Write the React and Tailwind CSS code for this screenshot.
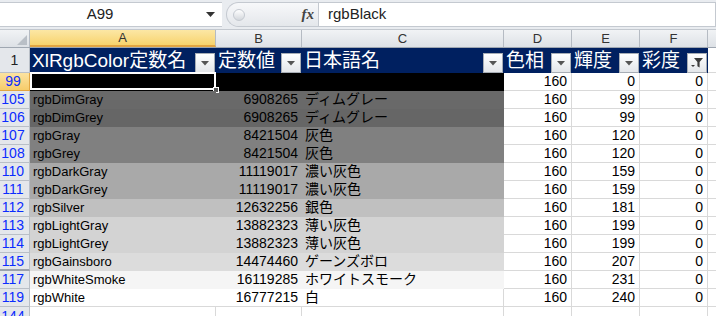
import React from 'react';

const FONT = { fontFamily: '"Liberation Sans", "Noto Sans CJK JP", sans-serif' };

const COLS = ['A', 'B', 'C', 'D', 'E', 'F'];
const W = ['w-[186px]', 'w-[86px]', 'w-[202px]', 'w-[68px]', 'w-[68px]', 'w-[68px]'];

const rows = [
  { n: 99, name: 'rgbBlack', val: '0', jp: '黒', h: 160, l: 0, s: 0, fill: 'bg-black border-black' },
  { n: 105, name: 'rgbDimGray', val: '6908265', jp: 'ディムグレー', h: 160, l: 99, s: 0, fill: 'bg-[#696969] border-[#696969]' },
  { n: 106, name: 'rgbDimGrey', val: '6908265', jp: 'ディムグレー', h: 160, l: 99, s: 0, fill: 'bg-[#666666] border-[#666666]' },
  { n: 107, name: 'rgbGray', val: '8421504', jp: '灰色', h: 160, l: 120, s: 0, fill: 'bg-[#808080] border-[#808080]' },
  { n: 108, name: 'rgbGrey', val: '8421504', jp: '灰色', h: 160, l: 120, s: 0, fill: 'bg-[#808080] border-[#808080]' },
  { n: 110, name: 'rgbDarkGray', val: '11119017', jp: '濃い灰色', h: 160, l: 159, s: 0, fill: 'bg-[#a9a9a9] border-[#a9a9a9]' },
  { n: 111, name: 'rgbDarkGrey', val: '11119017', jp: '濃い灰色', h: 160, l: 159, s: 0, fill: 'bg-[#a9a9a9] border-[#a9a9a9]' },
  { n: 112, name: 'rgbSilver', val: '12632256', jp: '銀色', h: 160, l: 181, s: 0, fill: 'bg-[#c0c0c0] border-[#c0c0c0]' },
  { n: 113, name: 'rgbLightGray', val: '13882323', jp: '薄い灰色', h: 160, l: 199, s: 0, fill: 'bg-[#d3d3d3] border-[#d3d3d3]' },
  { n: 114, name: 'rgbLightGrey', val: '13882323', jp: '薄い灰色', h: 160, l: 199, s: 0, fill: 'bg-[#d3d3d3] border-[#d3d3d3]' },
  { n: 115, name: 'rgbGainsboro', val: '14474460', jp: 'ゲーンズボロ', h: 160, l: 207, s: 0, fill: 'bg-[#dcdcdc] border-[#dcdcdc]' },
  { n: 117, name: 'rgbWhiteSmoke', val: '16119285', jp: 'ホワイトスモーク', h: 160, l: 231, s: 0, fill: 'bg-[#f5f5f5] border-[#f5f5f5]' },
  { n: 119, name: 'rgbWhite', val: '16777215', jp: '白', h: 160, l: 240, s: 0, fill: 'bg-white border-[#d9d9d9]' },
];

function FilterButton({ funnel }) {
  return (
    <div className="w-[20px] h-[20px] mr-[1px] shrink-0 bg-gradient-to-b from-white to-[#e3e6ea] border border-[#a7adb5] flex items-center justify-center">
      {funnel ? (
        <svg width="14" height="12" viewBox="0 0 14 12">
          <path d="M4 1h9L9.6 5v5.5L7.4 9.2V5z" fill="#3c3c3c" />
          <path d="M1 8h4L3 10z" fill="#3c3c3c" />
        </svg>
      ) : (
        <svg width="8" height="5" viewBox="0 0 8 5">
          <path d="M0 0h8L4 4.5z" fill="#555" />
        </svg>
      )}
    </div>
  );
}

function HeaderCell({ label, w, funnel }) {
  return (
    <div className={`${w} h-full shrink-0 flex items-end justify-between bg-[#002060] pl-[2px]`}>
      <span className="text-white text-[19px] leading-[24px] whitespace-nowrap self-center">{label}</span>
      <FilterButton funnel={funnel} />
    </div>
  );
}

export default function App() {
  return (
    <div className="w-[716px] h-[316px] overflow-hidden bg-white select-none" style={FONT}>
      {/* formula bar */}
      <div className="h-[30px] bg-[#e9ecf0] border-b border-[#c3c8cf] flex items-start pt-[2px]">
        <div className="w-[222px] h-[25px] bg-white border-y border-[#c4c9d0] flex items-center relative">
          <span className="w-[200px] text-center text-[15px] text-[#222]">A99</span>
          <svg className="ml-[6px]" width="9" height="5" viewBox="0 0 9 5">
            <path d="M0 0h9L4.5 5z" fill="#333" />
          </svg>
        </div>
        <div className="w-[4px]" />
        <div className="w-[92px] h-[25px] rounded-l-full bg-gradient-to-b from-[#f7f8fa] to-[#e4e7eb] border border-[#c4c9d0] border-r-0 flex items-center pl-[6px] pr-[4px]">
          <div className="w-[12px] h-[12px] rounded-full bg-gradient-to-b from-white to-[#d3d7dc] border border-[#c4c9d0]" />
          <span className="ml-auto text-[15px] italic font-bold text-[#444]" style={{ fontFamily: '"Liberation Serif", serif' }}>fx</span>
        </div>
        <div className="flex-1 h-[25px] bg-white border border-[#c4c9d0] flex items-center pl-[9px]">
          <span className="text-[15px] text-[#222]">rgbBlack</span>
        </div>
      </div>

      {/* column headers */}
      <div className="flex h-[18px] bg-gradient-to-b from-[#f1f3f5] to-[#dde1e6] border-b border-[#9fa7b1]">
        <div className="w-[30px] shrink-0 border-r border-[#b5bbc3] relative">
          <svg className="absolute right-[2px] bottom-[2px]" width="10" height="10" viewBox="0 0 10 10">
            <path d="M10 0v10H0z" fill="#b9bfc6" />
          </svg>
        </div>
        {COLS.map((c, i) => (
          <div
            key={c}
            className={`${W[i]} shrink-0 flex items-center justify-center text-[13px] text-[#333] border-r border-[#b5bbc3] ${
              i === 0 ? 'bg-gradient-to-b from-[#fce7a4] to-[#f7d36c] border-b-2 border-b-[#e2a541]' : ''
            }`}
          >
            {c}
          </div>
        ))}
        <div className="flex-1" />
      </div>

      {/* row 1: table header */}
      <div className="flex h-[25px]">
        <div className="w-[30px] shrink-0 bg-[#e4e7eb] border-r border-b border-[#b9bfc7] flex items-end justify-center pb-[1px] text-[14px] text-[#222]">
          1
        </div>
        <HeaderCell label="XlRgbColor定数名" w={W[0]} />
        <HeaderCell label="定数値" w={W[1]} />
        <HeaderCell label="日本語名" w={W[2]} />
        <HeaderCell label="色相" w={W[3]} />
        <HeaderCell label="輝度" w={W[4]} />
        <HeaderCell label="彩度" w={W[5]} funnel />
        <div className="flex-1 border-b border-[#d9d9d9]" />
      </div>

      {/* data rows */}
      {rows.map((r, idx) => {
        const sel = idx === 0;
        return (
          <div key={r.n} className="flex h-[18px]">
            <div
              className={`w-[30px] shrink-0 border-r flex items-center justify-center pr-[3px] text-[14px] text-[#0a2cff] ${
                sel
                  ? 'bg-gradient-to-b from-[#fce3a0] to-[#f6cc6a] border-[#e2a541] border-b'
                  : r.n === 115
                  ? 'bg-[#e4e7eb] border-[#b9bfc7] border-b-2 border-b-[#9aa1ab]'
                  : 'bg-[#e4e7eb] border-[#b9bfc7] border-b'
              }`}
            >
              {r.n}
            </div>
            <div className={`${W[0]} shrink-0 relative border-b ${r.fill} flex items-center pl-[3px] text-[13px] text-black`}>
              {sel ? null : r.name}
              {sel && (
                <>
                  <div className="absolute inset-0 -top-[1px] border-2 border-white" />
                  <div className="absolute -right-[3px] -bottom-[3px] w-[6px] h-[6px] bg-[#595959] border border-white" />
                </>
              )}
            </div>
            <div className={`${W[1]} shrink-0 border-b ${r.fill} flex items-center justify-end pr-[4px] text-[14px] text-black`}>
              {r.val}
            </div>
            <div className={`${W[2]} shrink-0 border-b ${r.fill} border-r flex items-center pl-[3px] text-[14px] text-black whitespace-nowrap`}>
              {r.jp}
            </div>
            {[r.h, r.l, r.s].map((v, k) => (
              <div
                key={k}
                className={`${W[3 + k]} shrink-0 bg-white border-b border-r border-[#d9d9d9] flex items-center justify-end pr-[4px] text-[14px] text-black`}
              >
                {v}
              </div>
            ))}
            <div className="flex-1 border-b border-[#d9d9d9]" />
          </div>
        );
      })}

      {/* partially visible next row */}
      <div className="flex h-[18px]">
        <div className="w-[30px] shrink-0 bg-[#e4e7eb] border-r border-[#b9bfc7] flex items-center justify-center pr-[3px] text-[14px] text-[#0a2cff]">
          144
        </div>
        <div className={`${W[0]} shrink-0 border-r border-[#d9d9d9]`} />
        <div className={`${W[1]} shrink-0 border-r border-[#d9d9d9]`} />
        <div className={`${W[2]} shrink-0 border-r border-[#d9d9d9]`} />
        <div className={`${W[3]} shrink-0 border-r border-[#d9d9d9]`} />
        <div className={`${W[4]} shrink-0 border-r border-[#d9d9d9]`} />
        <div className={`${W[5]} shrink-0 border-r border-[#d9d9d9]`} />
        <div className="flex-1" />
      </div>
    </div>
  );
}
